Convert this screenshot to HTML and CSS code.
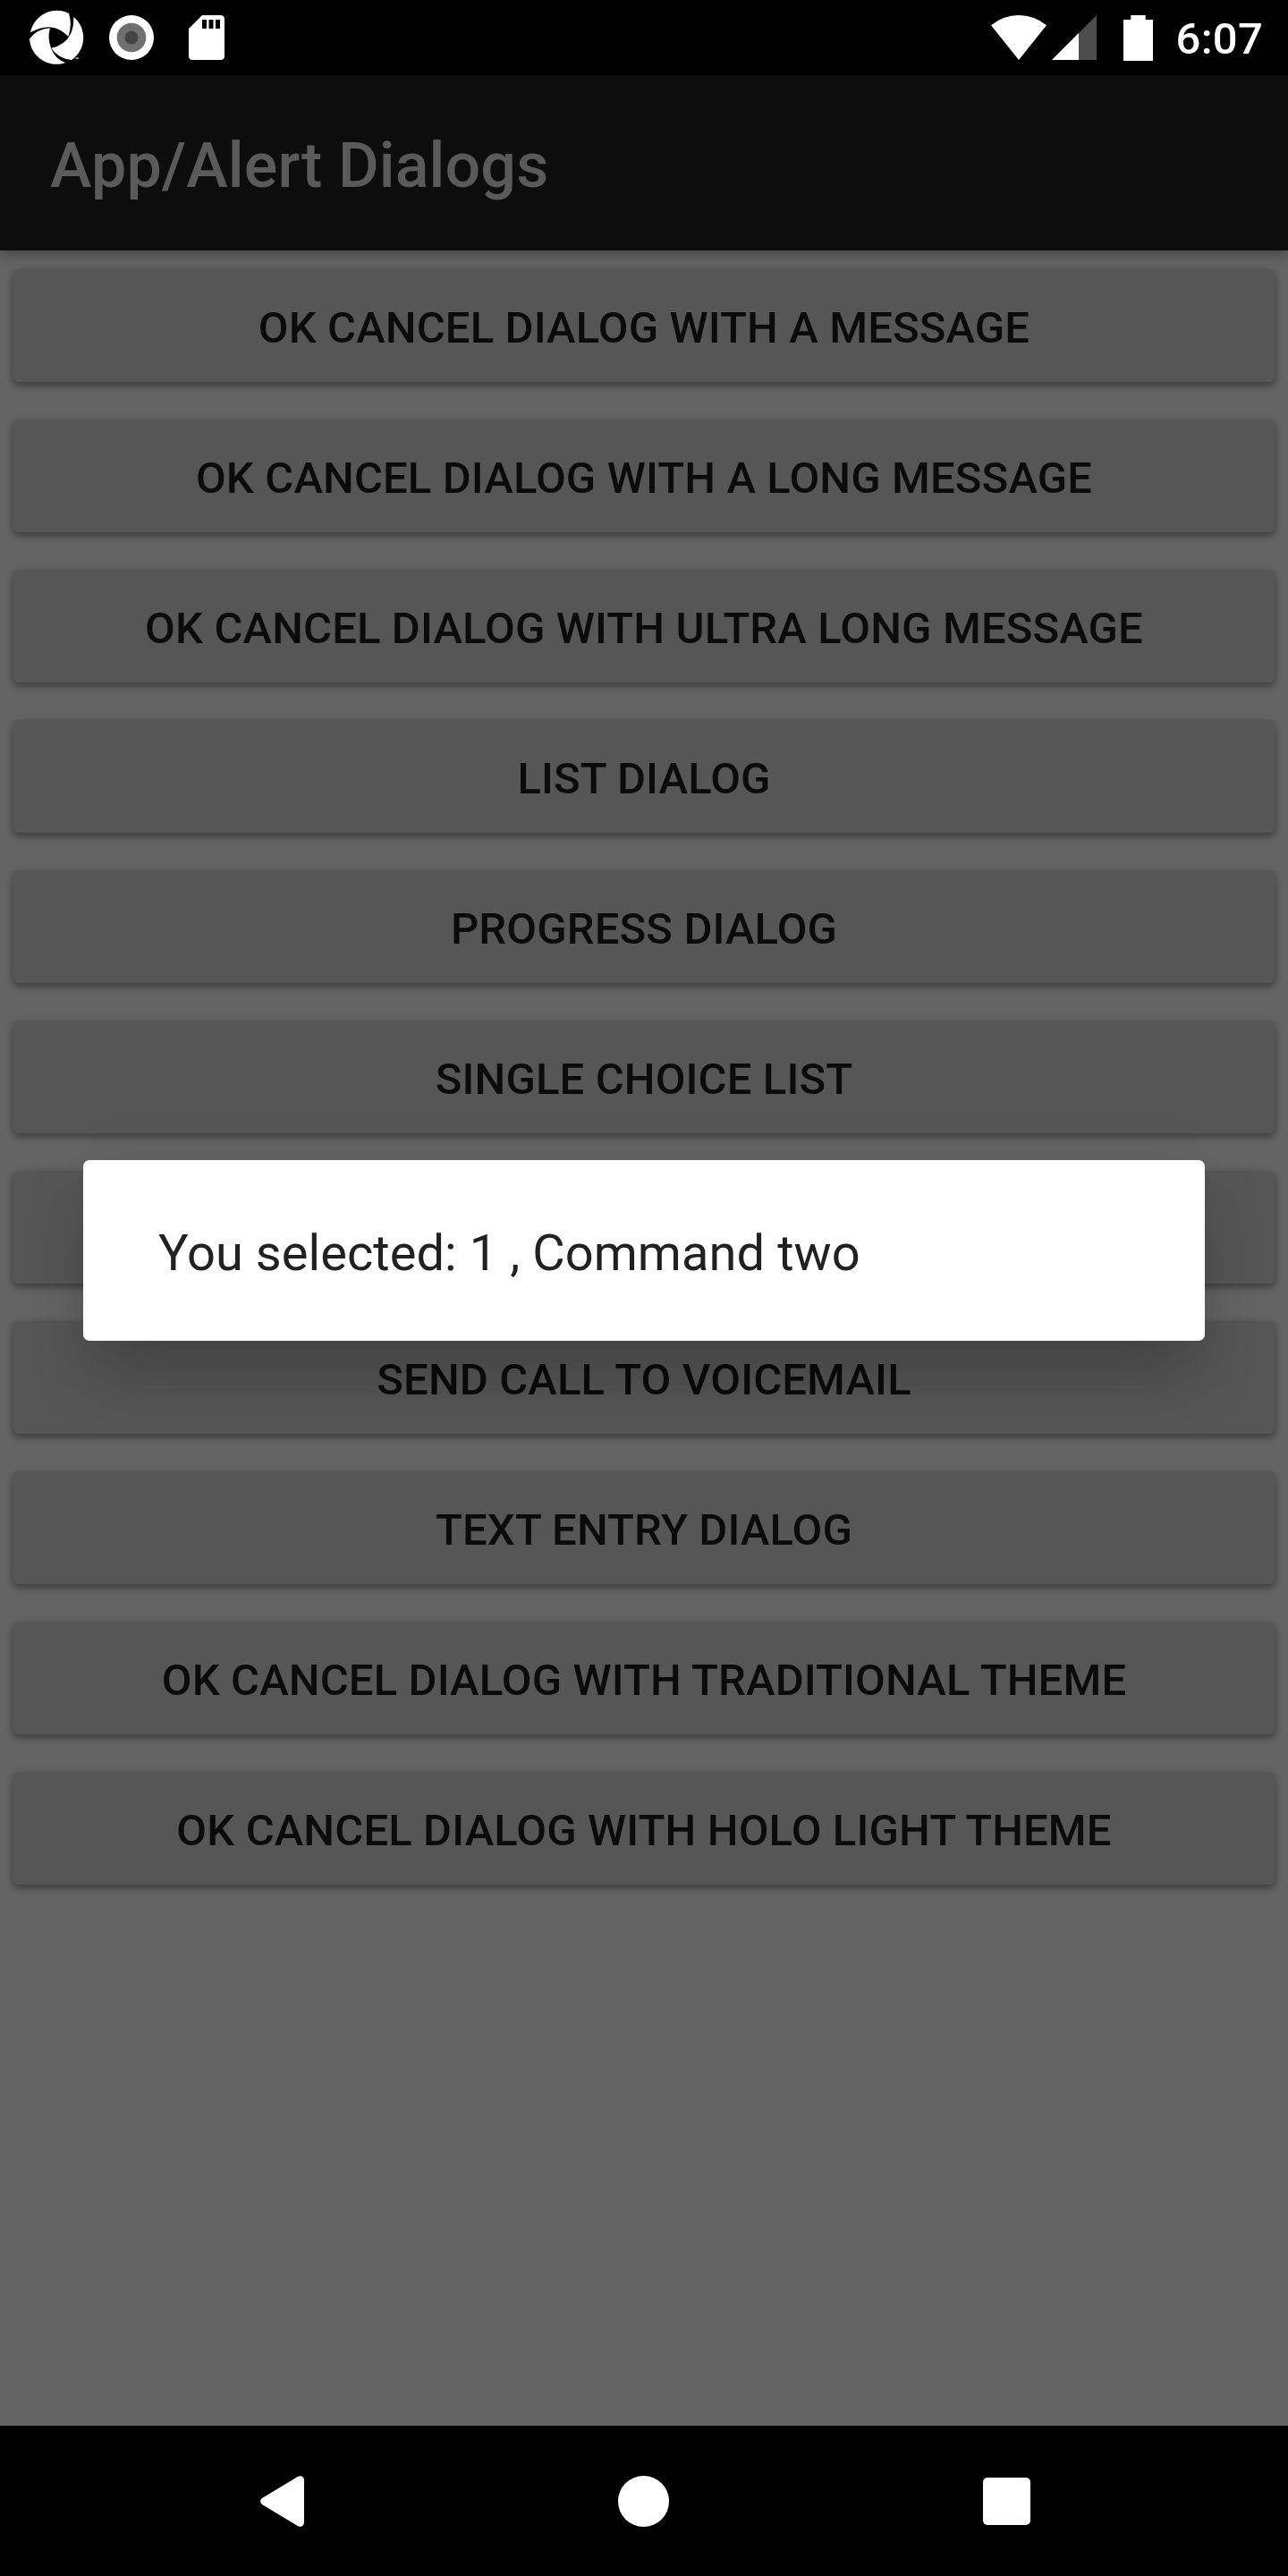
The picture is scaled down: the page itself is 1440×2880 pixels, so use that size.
FILE: index.html
```html
<!DOCTYPE html>
<html lang="en">
<head>
<meta charset="utf-8">
<title>App/Alert Dialogs</title>
<link rel="stylesheet" href="styles.css">
</head>
<body>
<div class="screen">
  <header class="status-bar">
    <div class="notifications">
      <svg class="icon-swirl" viewBox="96 33 180 186" aria-hidden="true">
        <path d="M102 109A90 90 0 0 1 231 45Q243 83 229 122Q198 92 165 91Q134 91 102 109Z"/>
        <path d="M247 57A90 90 0 0 1 240 201Q195 196 172 161Q219 151 237 113Q248 90 247 57Z"/>
        <path d="M99 130Q122 98 168 94Q158 126 171 161Q184 198 220 210A90 90 0 0 1 99 130Z"/>
        <text x="251" y="206" class="trademark">™</text>
      </svg>
      <svg class="icon-record" viewBox="0 0 50 50" aria-hidden="true">
        <circle cx="25" cy="25" r="25" fill="#fff"/>
        <circle cx="25" cy="25" r="16.3" fill="#707070"/>
        <circle cx="25" cy="25" r="7.5" fill="#444"/>
      </svg>
      <svg class="icon-card" viewBox="0 0 40 50" aria-hidden="true">
        <path d="M15 0H35.500Q40 0 40 4.500V45.500Q40 50 35.500 50H4.500Q0 50 0 45.500V15ZM15 5V15H20V5ZM22.500 5V15H27.500V5ZM30 5V15H35V5Z" fill-rule="evenodd"/>
      </svg>
    </div>
    <div class="system">
      <svg class="icon-wifi" viewBox="0 0 62 50" aria-hidden="true">
        <path d="M0 11.300Q14 0 31 0T62 11.300L31 50Z"/>
      </svg>
      <svg class="icon-signal" viewBox="0 0 50 50" aria-hidden="true">
        <path d="M0 50L50 0V50Z" fill="#4d4d4d"/>
        <path d="M0 50L30 20V50Z"/>
      </svg>
      <svg class="icon-battery" viewBox="0 0 33 51" aria-hidden="true">
        <path d="M8.300 0H24.700V5H33V51H0V5H8.300Z"/>
      </svg>
      <span class="clock">6:07</span>
    </div>
  </header>
  <div class="app-bar"><h1 class="app-title">App/Alert Dialogs</h1></div>
  <main class="content">
    <button class="button">OK Cancel dialog with a message</button>
    <button class="button">OK Cancel dialog with a long message</button>
    <button class="button">OK Cancel dialog with ultra long message</button>
    <button class="button">List dialog</button>
    <button class="button">Progress dialog</button>
    <button class="button">Single choice list</button>
    <button class="button"></button>
    <button class="button">Send Call to VoiceMail</button>
    <button class="button">Text Entry dialog</button>
    <button class="button">OK Cancel dialog with traditional theme</button>
    <button class="button">OK Cancel dialog with Holo Light theme</button>
  </main>
  <nav class="nav-bar">
    <svg class="nav-back" viewBox="0 0 49 57" aria-hidden="true">
      <path d="M44.500 4.700V52.300L4.700 28.500Z" stroke="#fff" stroke-width="9" stroke-linejoin="round"/>
    </svg>
    <span class="nav-home"></span>
    <span class="nav-recents"></span>
  </nav>
  <div class="overlay">
    <div class="dialog" role="dialog">You selected: 1 , Command two</div>
  </div>
</div>
</body>
</html>
```

FILE: styles.css
```css
* { box-sizing: border-box; }

body {
  margin: 0;
  background: #000;
  font-family: Roboto, sans-serif;
}

svg {
  display: block;
  fill: #fff;
}

.screen {
  position: relative;
  display: flex;
  flex-direction: column;
  width: 1440px;
  height: 2880px;
  overflow: hidden;
}

.status-bar {
  display: flex;
  justify-content: space-between;
  height: 84px;
  flex: none;
  padding: 0 28px 0 32px;
  background: #000;
}

.notifications,
.system {
  display: flex;
  align-items: center;
}

.icon-swirl { width: 60px; height: 62px; overflow: visible; }
.trademark { font-size: 20px; font-weight: 700; }
.icon-record { width: 50px; height: 50px; margin-left: 30px; }
.icon-card { width: 40px; height: 50px; margin-left: 39px; }
.icon-wifi { width: 62px; height: 50px; }
.icon-signal { width: 50px; height: 50px; margin-left: 6px; }
.icon-battery { width: 33px; height: 51px; margin-left: 30px; }

.clock {
  margin-left: 26px;
  color: #fff;
  font-size: 49px;
  font-weight: 500;
  letter-spacing: 0.25px;
  line-height: 84px;
  padding-top: 3px;
}

.app-bar {
  display: flex;
  align-items: center;
  flex: none;
  height: 196px;
  padding: 5px 0 0 56px;
  background: #0d0d0d;
  box-shadow: 0 4px 14px rgba(0, 0, 0, 0.35);
  z-index: 1;
}

.app-title {
  margin: 0;
  color: #5a5a5a;
  font-size: 70px;
  font-weight: 500;
  letter-spacing: 0.12px;
  line-height: 82px;
}

.content {
  display: flex;
  flex-direction: column;
  gap: 42px;
  flex: 1;
  padding: 21px 14px 0;
  background: #646464;
}

.button {
  flex: none;
  height: 126px;
  padding: 6px 0 0;
  border: 0;
  border-radius: 7px;
  background: #565656;
  box-shadow: 0 6px 7px rgba(0, 0, 0, 0.25), 0 0 7px rgba(0, 0, 0, 0.18);
  color: #0b0b0b;
  font: 500 49px/58px Roboto, sans-serif;
  letter-spacing: 0.13px;
  text-transform: uppercase;
}

.nav-bar {
  display: flex;
  align-items: center;
  flex: none;
  height: 168px;
  padding-left: 291px;
  background: #000;
}

.nav-back { width: 49px; height: 57px; }

.nav-home {
  width: 57px;
  height: 57px;
  margin-left: 351px;
  border-radius: 50%;
  background: #fff;
}

.nav-recents {
  width: 53px;
  height: 53px;
  margin-left: 351px;
  border-radius: 5px;
  background: #fff;
}

.overlay {
  position: absolute;
  inset: 84px 0 168px;
  z-index: 2;
  display: flex;
  align-items: center;
  justify-content: center;
}

.dialog {
  width: 1254px;
  height: 202px;
  padding: 71px 84px 0;
  border-radius: 7px;
  background: #fff;
  box-shadow: 0 60px 72px -12px rgba(0, 0, 0, 0.16), 0 12px 70px rgba(0, 0, 0, 0.09);
  color: #212121;
  font-size: 56px;
  letter-spacing: 0.06px;
  line-height: 66px;
}
```
